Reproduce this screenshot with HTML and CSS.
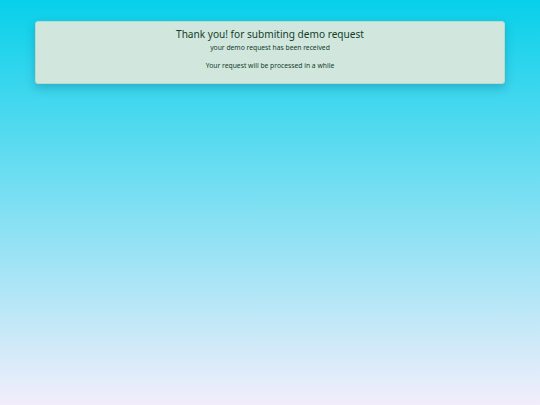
FILE: index.html
```html
<!DOCTYPE html>
<html lang="en">
<head>
<meta charset="utf-8">
<link rel="stylesheet" href="styles.css">
</head>
<body>
<div class="page">
  <div class="alert">
    <h4 class="alert-title">Thank you! for submiting demo request</h4>
    <p class="alert-line">your demo request has been received</p>
    <p class="alert-line last">Your request will be processed in a while</p>
  </div>
</div>
</body>
</html>
```

FILE: styles.css
```css
html, body {
  margin: 0;
  padding: 0;
  height: 100%;
}
body {
  font-family: "Noto Sans", sans-serif;
  background: linear-gradient(to bottom, #07d0ea 0%, #f2eefb 100%);
}
.page {
  padding: 21px 35px 0;
}
.alert {
  background: #d1e7dd;
  border: 1px solid #badbcc;
  border-radius: 3px;
  text-align: center;
  padding: 5px 10px 12px;
  box-shadow: 0 4px 10px rgba(0, 60, 90, 0.25);
}
.alert-title {
  margin: 0 0 2px;
  font-size: 10.1px;
  font-weight: 400;
  line-height: 14px;
  color: #143d2c;
}
.alert-line {
  margin: 0 0 8px;
  font-size: 6.75px;
  line-height: 10px;
  color: #143d2c;
}
.alert-line.last {
  margin-bottom: 0;
}
```
